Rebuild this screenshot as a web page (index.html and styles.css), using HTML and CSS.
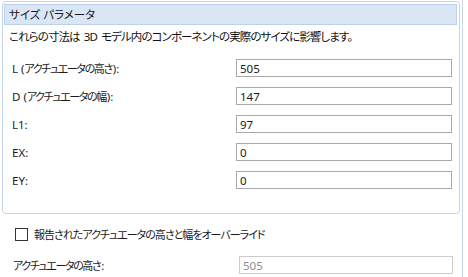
FILE: index.html
```html
<!DOCTYPE html>
<html lang="ja">
<head>
<meta charset="utf-8">
<link rel="stylesheet" href="styles.css">
</head>
<body>
<div class="panel">
  <section class="group">
    <div class="group-title">サイズ パラメータ</div>
    <p class="desc">これらの寸法は 3D モデル内のコンポーネントの実際のサイズに影響します。</p>
    <div class="fields">
      <div class="row"><span class="label">L (<span class="ja">アクチュエータの高さ</span>):</span><input class="field" type="text" value="505"></div>
      <div class="row"><span class="label">D (<span class="ja">アクチュエータの幅</span>):</span><input class="field" type="text" value="147"></div>
      <div class="row"><span class="label">L1:</span><input class="field" type="text" value="97"></div>
      <div class="row"><span class="label">EX:</span><input class="field" type="text" value="0"></div>
      <div class="row"><span class="label">EY:</span><input class="field" type="text" value="0"></div>
    </div>
  </section>
  <label class="check-row"><span class="checkbox"></span><span class="ja-check">報告されたアクチュエータの高さと幅をオーバーライド</span></label>
  <div class="row row-bottom"><span class="label"><span class="ja">アクチュエータの高さ</span>:</span><input class="field field-disabled" type="text" value="505" disabled></div>
</div>
</body>
</html>
```

FILE: styles.css
```css
html, body {
  margin: 0;
  padding: 0;
  background: #ffffff;
}
body {
  font-family: "Segoe UI", "Noto Sans", "Noto Sans CJK JP", sans-serif;
  font-size: 11.5px;
  color: #1a1a1a;
  font-feature-settings: "palt";
}
.panel {
  width: 463px;
  height: 277px;
  border-right: 1px solid #c9d7e8;
  box-sizing: border-box;
  overflow: hidden;
}
.group {
  margin: 1px 0 0 2px;
  width: 458px;
  height: 213px;
  box-sizing: border-box;
  border: 1px solid #c3d5ea;
  border-radius: 4px;
  display: flex;
  flex-direction: column;
}
.group-title {
  margin: 2px 2px 0 1px;
  height: 21px;
  box-sizing: border-box;
  border: 1px solid #bcd0e9;
  background: #dbe6f4;
  padding-left: 4px;
  line-height: 19px;
  color: #1a1a1a;
}
.desc {
  margin: 4px 0 0 6px;
  line-height: 16px;
  color: #111;
  letter-spacing: -0.9px;
  word-spacing: 2px;
}
.fields {
  display: flex;
  flex-direction: column;
  gap: 10px;
  padding: 0 7px 0 9px;
  margin-top: 14px;
}
.row {
  display: flex;
  align-items: center;
  height: 18px;
}
.label {
  flex: 1;
}
.ja {
  font-size: 11px;
  letter-spacing: -1.4px;
  margin-right: 1px;
}
.ja-check {
  font-size: 11px;
  letter-spacing: -1px;
}
.field {
  width: 216px;
  height: 18px;
  box-sizing: border-box;
  border: 1px solid #a9a9a9;
  padding: 0 3px;
  font: inherit;
  font-size: 11.5px;
  color: #1a1a1a;
  background: #fff;
  margin: 0;
  outline: none;
}
.check-row {
  display: flex;
  align-items: center;
  gap: 6px;
  margin: 12px 0 0 15px;
  height: 16px;
}
.checkbox {
  width: 13px;
  height: 13px;
  box-sizing: border-box;
  border: 1px solid #333;
  background: #fff;
}
.row-bottom {
  margin: 14px 0 0 13px;
  width: 440px;
}
.field-disabled {
  width: 214px;
  border-color: #cccccc;
  color: #8d8d8d;
  background: #fff;
}
```
